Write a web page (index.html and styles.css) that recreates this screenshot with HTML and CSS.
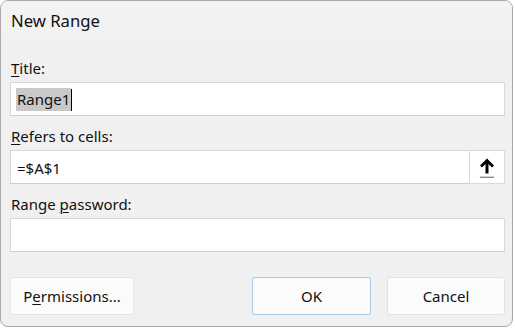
FILE: index.html
```html
<!DOCTYPE html>
<html lang="en">
<head>
  <meta charset="UTF-8" />
  <meta name="viewport" content="width=device-width, initial-scale=1.0"/>
  <title>New Range</title>
  <link rel="stylesheet" href="styles.css">
</head>
<body>

  <div class="dialog">
    <div class="titlebar">New Range</div>

    <div class="content">
      <label class="field-label"><u>T</u>itle:</label>
      <div class="textbox">
        <span class="selected">Range1</span><span class="caret"></span>
      </div>

      <label class="field-label"><u>R</u>efers to cells:</label>
      <div class="ref-row">
        <div class="textbox grow">=$A$1</div>
        <button class="collapse-btn" title="Collapse dialog">
          <svg width="16" height="22" viewBox="0 0 16 22">
            <path d="M8 1.5 L15 8.5 L13 10.4 L9.5 6.9 L9.5 16.5 L6.5 16.5 L6.5 6.9 L3 10.4 L1 8.5 Z" fill="#000"/>
            <rect x="1" y="19.6" width="14" height="1.4" fill="#8a8a8a"/>
          </svg>
        </button>
      </div>

      <label class="field-label">Range <u>p</u>assword:</label>
      <div class="textbox"></div>

      <div class="actions">
        <button class="btn btn-wide">P<u>e</u>rmissions...</button>
        <div class="spacer"></div>
        <button class="btn btn-ok">OK</button>
        <button class="btn btn-cancel">Cancel</button>
      </div>
    </div>
  </div>

</body>
</html>
```

FILE: styles.css
```css
body {
  margin: 0;
  background: #ffffff;
  font-family: "Noto Sans", "Open Sans", sans-serif;
  color: #111111;
}

.dialog {
  width: 511px;
  height: 325px;
  border: 1px solid #a9a9a9;
  border-radius: 8px;
  background: #f0f0f0;
  overflow: hidden;
  display: flex;
  flex-direction: column;
}

.titlebar {
  height: 43px;
  background: linear-gradient(#f3f3f3, #f2f2f2 70%, #f0f0f0);
  font-size: 16.7px;
  line-height: 20px;
  padding: 10px 0 0 10px;
  box-sizing: border-box;
}

.content {
  padding: 14px 7px 0 9px;
  display: flex;
  flex-direction: column;
}

.field-label {
  font-size: 15px;
  line-height: 20px;
  padding-left: 1px;
  margin-bottom: 4px;
}

.field-label u {
  text-decoration-thickness: 1px;
  text-underline-offset: 2px;
}

.textbox {
  height: 34px;
  box-sizing: border-box;
  background: #ffffff;
  border: 1px solid #d9d9d9;
  border-bottom-color: #cfcfcf;
  display: flex;
  align-items: center;
  padding: 1px 0 0 6px;
  font-size: 15px;
  line-height: 20px;
  margin-bottom: 10px;
}

.selected {
  background: #c9c9c9;
  line-height: 23px;
  padding: 0 1px;
  margin-left: -1px;
}

.caret {
  width: 1px;
  height: 22px;
  background: #000;
}

.ref-row {
  display: flex;
  margin-bottom: 10px;
}

.ref-row .textbox {
  margin-bottom: 0;
}

.grow {
  flex: 1;
}

.collapse-btn {
  width: 36px;
  height: 34px;
  margin-left: -1px;
  box-sizing: border-box;
  border: 1px solid #d9d9d9;
  background: #ffffff;
  padding: 0;
  display: flex;
  align-items: center;
  justify-content: center;
  cursor: pointer;
}

.collapse-btn svg {
  margin-top: 2px;
}

.actions {
  display: flex;
  gap: 16px;
  margin-top: 15px;
}

.spacer {
  flex: 1;
}

.btn {
  height: 38px;
  box-sizing: border-box;
  background: #fbfbfb;
  border: 1px solid #e3e3e3;
  border-radius: 2px;
  font-family: "Noto Sans", "Open Sans", sans-serif;
  font-size: 15px;
  color: #111111;
  padding: 0;
  cursor: pointer;
}

.btn u {
  text-decoration-thickness: 1px;
  text-underline-offset: 2px;
}

.btn-wide {
  width: 124px;
}

.btn-ok {
  width: 119px;
  border-color: #a9c9e9;
}

.btn-cancel {
  width: 118px;
}
```
